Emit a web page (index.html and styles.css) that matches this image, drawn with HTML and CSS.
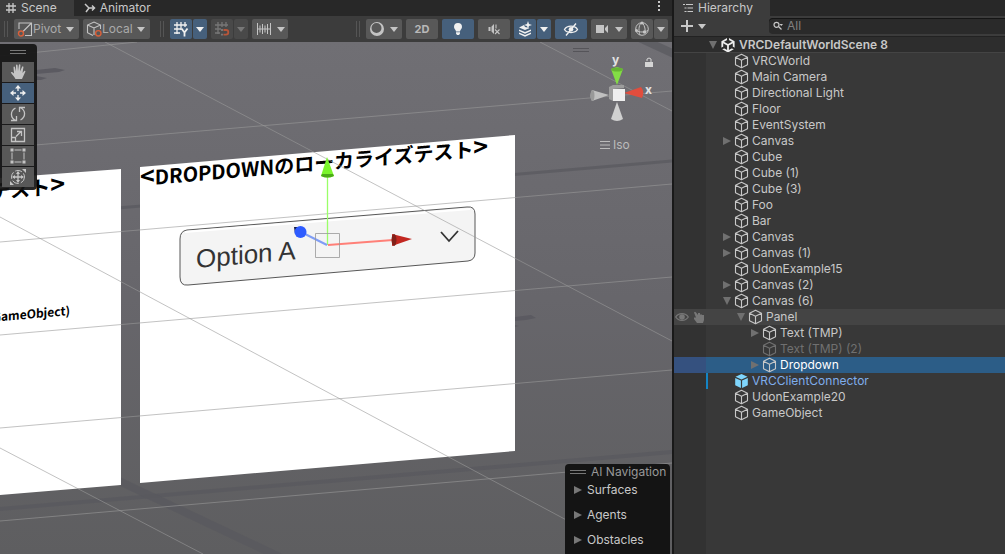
FILE: index.html
```html
<!DOCTYPE html>
<html lang="en">
<head>
<meta charset="utf-8">
<title>Scene editor</title>
<link rel="stylesheet" href="styles.css">
</head>
<body>
<svg class="defs" width="0" height="0" aria-hidden="true">
  <symbol id="caret" viewBox="0 0 8 5"><path d="M0 0h8L4 5z" fill="currentColor"/></symbol>
  <symbol id="arrow" viewBox="0 0 8 8"><path d="M0 0l8 4-8 4z" fill="currentColor"/></symbol>
  <symbol id="arrow-down" viewBox="0 0 8 8"><path d="M0 0h8L4 8z" fill="currentColor"/></symbol>
  <symbol id="cube" viewBox="0 0 16 16"><path d="M7.500 1.300l6 3v7.400l-6 3-6-3V4.300zM1.500 4.300l6 3 6-3M7.500 7.300v7.400" fill="none" stroke="currentColor" stroke-width="1.1" stroke-linejoin="round"/></symbol>
  <symbol id="prefab" viewBox="0 0 16 16"><path d="M7.500 1l6 2.700-6 2.700-6-2.700zM1.200 5l5.700 2.500V15l-5.700-2.800zM13.800 5L8.100 7.500V15l5.700-2.800z" fill="currentColor"/></symbol>
</svg>
<main class="editor">
  <section class="pane" aria-label="Scene">
    <div class="tabs" role="tablist">
      <button class="tab tab-active" role="tab" aria-selected="true"><svg width="12" height="12" viewBox="0 0 12 12"><path d="M4 1v10M8 1v10M1 4h10M1 8h10" stroke="currentColor" stroke-width="1.3"/></svg>Scene</button>
      <button class="tab" role="tab" aria-selected="false"><svg width="12" height="12" viewBox="0 0 12 12"><path d="M1 2l4 4-3 4M5 6h5M8 3.500L10.500 6 8 8.500" fill="none" stroke="currentColor" stroke-width="1.500"/></svg>Animator</button>
      <button class="more" aria-label="More"><svg width="4" height="12" viewBox="0 0 4 12"><path d="M1 1h2v2H1zM1 5h2v2H1zM1 9h2v2H1z" fill="currentColor"/></svg></button>
    </div>
    <div class="toolbar">
      <div class="group">
        <i class="grip"></i>
        <label class="tool pivot"><svg width="16" height="16" viewBox="0 0 16 16"><path d="M2 8V2h12.500v12.500H8M6 10.500L14.500 2" fill="none" stroke="currentColor" stroke-width="1.100"/><circle cx="4" cy="12.500" r="2.500" fill="none" stroke="#d9603a" stroke-width="1.400"/></svg><select aria-label="Handle position"><option>Pivot</option></select><svg class="caret"><use href="#caret"/></svg></label>
        <label class="tool local"><svg width="16" height="16" viewBox="0 0 16 16"><path d="M7 14.500l-5.500-2.800V4L8 1l6.500 3v4M1.500 4L8 7l6.500-3M8 7v7" fill="none" stroke="currentColor" stroke-width="1.100"/><circle cx="12.300" cy="12.300" r="2.700" fill="none" stroke="#d9603a" stroke-width="1.400"/></svg><select aria-label="Handle rotation"><option>Local</option></select><svg class="caret"><use href="#caret"/></svg></label>
      </div>
      <div class="group">
        <i class="grip"></i>
        <span class="split"><button class="tool icon on" aria-label="Grid visibility"><svg width="16" height="16" viewBox="0 0 16 16"><path d="M4 1v12M8 1v8M12 1v5M1 4h13M1 8h7M1 12h6" stroke="currentColor" stroke-width="1.300"/><path d="M8.500 7.500l3 4 3-4M11.500 11.500V15.500" fill="none" stroke="currentColor" stroke-width="1.800"/></svg></button><button class="tool drop on" aria-label="Grid options"><svg class="caret"><use href="#caret"/></svg></button></span>
        <span class="split off"><button class="tool icon" disabled aria-label="Grid snapping"><svg width="16" height="16" viewBox="0 0 16 16"><path d="M4 1v12M8 1v5M12 1v5M1 4h13M1 8h6M1 12h5" stroke="currentColor" stroke-width="1.300"/><path d="M9.500 9H12a2.300 2.300 0 010 4.600H9.500" fill="none" stroke="#b8563a" stroke-width="1.800"/><path d="M7 9h2M7 13.600h2" stroke="currentColor" stroke-width="1.800"/></svg></button><button class="tool drop" disabled aria-label="Snapping options"><svg class="caret"><use href="#caret"/></svg></button></span>
        <button class="tool menu" aria-label="Snap increment"><svg width="16" height="16" viewBox="0 0 16 16"><path d="M1.500 2v12M14.500 2v12M4 4.500v7M6.500 3v10M9 4.500v7M11.500 3v10M1 8h14" stroke="currentColor"/></svg><svg class="caret"><use href="#caret"/></svg></button>
      </div>
      <div class="group end">
        <i class="grip"></i>
        <button class="tool menu" aria-label="Draw mode"><svg width="16" height="16" viewBox="0 0 16 16"><path fill-rule="evenodd" d="M8 1a7 7 0 100 14A7 7 0 108 1zM7.500 2a5 5 0 110 10 5 5 0 110-10z" fill="currentColor"/></svg><svg class="caret"><use href="#caret"/></svg></button>
        <button class="tool wide two-d">2D</button>
        <button class="tool wide on" aria-label="Lighting"><svg width="16" height="16" viewBox="0 0 16 16"><path d="M8 2a4 4 0 014 4c0 2-1.800 2.800-2 4.500H6C5.800 8.800 4 8 4 6a4 4 0 014-4zM6 11.300h4v1.200L9 14H7l-1-1.500z" fill="currentColor"/></svg></button>
        <button class="tool wide" aria-label="Audio"><svg width="16" height="16" viewBox="0 0 16 16"><path d="M2.500 6h2v4h-2zM5.500 5.500L8 3v10l-2.500-2.500z" fill="currentColor"/><path d="M10 3.500v4M9 8.500l4.500 4.500M13.500 8.500L9 13" stroke="currentColor" stroke-width="1.100"/></svg></button>
        <span class="split"><button class="tool icon on" aria-label="Effects"><svg width="16" height="16" viewBox="0 0 16 16"><path d="M2 6.500L7 4l1 2 4.500 1L8 9zM2 8.500L8 11l6-2.500V10l-6 2.700L2 10zM2 11.500L8 14l6-2.500V13l-6 2.700L2 13z" fill="currentColor"/><path d="M11 0l1 3 3 1-3 1-1 3-1-3-3-1 3-1z" fill="currentColor"/></svg></button><button class="tool drop on" aria-label="Effects options"><svg class="caret"><use href="#caret"/></svg></button></span>
        <button class="tool wide on" aria-label="Hidden objects"><svg width="16" height="16" viewBox="0 0 16 16"><path d="M1.500 8.500C4 4 12 4 14.500 8.500 12 12.500 4 12.500 1.500 8.500zM13 2.500l-10 12" fill="none" stroke="currentColor" stroke-width="1.400"/><circle cx="8" cy="8.300" r="2.300" fill="currentColor"/></svg></button>
        <button class="tool menu" aria-label="Camera"><svg width="16" height="16" viewBox="0 0 16 16"><path d="M2 4h8v8H2zM11 7l3-3v8l-3-3z" fill="currentColor"/></svg><svg class="caret"><use href="#caret"/></svg></button>
        <span class="split"><button class="tool icon" aria-label="Gizmos"><svg width="16" height="16" viewBox="0 0 16 16"><g fill="none" stroke="currentColor"><circle cx="8" cy="8" r="6.300"/><path d="M7 2C4.500 5 4.500 10 6 14M8.500 2c2.500 3 3 7 2.500 10M2 9.500c4 2 8 2 12 0"/></g><circle cx="8" cy="2" r="1.500" fill="currentColor"/><circle cx="2.500" cy="9.500" r="1.500" fill="currentColor"/><circle cx="10.500" cy="11" r="1.700" fill="currentColor"/></svg></button><button class="tool drop" aria-label="Gizmo options"><svg class="caret"><use href="#caret"/></svg></button></span>
      </div>
    </div>
    <div class="viewport">
      <svg class="world" viewBox="0 42 672 512" preserveAspectRatio="xMinYMin slice" role="img" aria-label="3D scene">
        <defs><linearGradient id="ground" x1="0" y1="0" x2="0" y2="1"><stop offset="0" stop-color="#706f74"/><stop offset=".5" stop-color="#67666b"/><stop offset="1" stop-color="#5e5e60"/></linearGradient></defs>
        <rect y="42" width="672" height="512" fill="url(#ground)"/>
        <g fill="none" stroke="#59585e" stroke-opacity=".7">
          <path d="M0 218L672 161" stroke-width="3"/><path d="M0 509L672 452" stroke-width="4"/>
          <path d="M100 472L290 562" stroke-width="8"/><path d="M635 36L685 59" stroke-width="8"/>
        </g>
        <path d="M36 70l19-2 10 2-6 2-23 2zM36 76l11 2-6 2h-5zM515 317l16-2 5 3-10 2-11 1zM515 325l4 1-4 1z" fill="#5b5a61"/>
        <path d="M0 178L121 169V485L0 495zM140 167L515 135V451L140 483z" fill="#fff"/>
        <g class="banner">
          <text transform="translate(140 186) skewY(-5)"><tspan class="bracket">&lt;</tspan>DROPDOWNのローカライズテスト<tspan class="bracket">&gt;</tspan></text>
          <text text-anchor="end" transform="translate(65 193) skewY(-5)">テスト<tspan class="bracket">&gt;</tspan></text>
          <text class="caption" text-anchor="end" transform="translate(70 315) skewY(-5)">GameObject)</text>
        </g>
        <path d="M187 230L467 207Q475 206 475 214V253Q475 260 468 261L188 285Q180 286 180 277V239Q180 231 187 230z" fill="#f4f4f4" stroke="#444" stroke-width=".9"/>
        <path d="M185 232L470 209" stroke="#fff" stroke-width="2"/>
        <text class="option" transform="translate(196 268) skewY(-5)">Option A</text>
        <path d="M441 232l8 9 9-10" fill="none" stroke="#333" stroke-width="1.800"/>
        <g fill="none" stroke="#999" stroke-opacity=".6">
          <path d="M0 56L137 42M0 148L672 91M0 242L672 184M0 335L672 277M0 428L672 370M0 521L672 463"/>
          <path d="M105 42L672 341M0 217L630 554M0 448L203 554M540 42L672 111"/>
        </g>
        <path d="M327.500 245V177" stroke="#9aff68" stroke-width="1.300"/><path d="M321 176l6-19 7 19q-6 3-13 0z" fill="#7bf52c"/><path d="M321 176q6 3 13 0l-1-2h-11z" fill="#4cab18"/>
        <path d="M328 245l65-5" stroke="#ff8078" stroke-width="2"/><path d="M392 234l20 5-20 7z" fill="#c22720"/><ellipse cx="394" cy="240" rx="2.500" ry="6" fill="#812019"/>
        <path d="M327 245l-24-12" stroke="#7f9df5" stroke-width="2"/><path d="M294 227h6v7h-5z" fill="#101a48"/><circle cx="300.500" cy="232" r="6" fill="#2d5bff"/>
        <path d="M315.500 233.500h24v24h-24z" fill="none" stroke="#999" stroke-opacity=".8"/>
      </svg>
      <div class="palette" role="toolbar" aria-label="Tools">
        <i class="handle"></i>
        <button class="tool" aria-label="Hand"><svg width="16" height="16" viewBox="0 0 16 16"><path d="M5.500 15C4 12 2 10.500.800 8.500c.700-1 1.800-.500 3.200 1L3.500 3.500c0-1.200 1.300-1.200 1.500 0L6 7.500V1.500c0-1.200 1.500-1.200 1.600 0L8 7l.900-6c.200-1.200 1.600-1 1.500.200L10 7.500 12 3c.5-1.200 1.700-.700 1.400.500L12.500 9l1.700-2c.8-.700 1.600 0 1 1L12 15z" fill="currentColor"/></svg></button>
        <button class="tool on" aria-label="Move"><svg width="16" height="16" viewBox="0 0 16 16"><path d="M8 2v4M8 10v4M2 8h4M10 8h4" stroke="currentColor" stroke-width="1.300"/><path d="M5 3.500L8 0l3 3.500zM5 12.500L8 16l3-3.500zM3.500 5L0 8l3.500 3zM12.500 5L16 8l-3.500 3z" fill="currentColor"/></svg></button>
        <button class="tool" aria-label="Rotate"><svg width="16" height="16" viewBox="0 0 16 16"><path d="M6 14.500C0 12 0 5 5.500 2M10 1.500C16 4 16 11 10.500 14M1 14.500h5.500V10M15 1.500H9.500V6" fill="none" stroke="currentColor" stroke-width="1.300"/></svg></button>
        <button class="tool" aria-label="Scale"><svg width="16" height="16" viewBox="0 0 16 16"><path d="M1.500 1.500h13v13h-13zM1.500 10.500h4v4M6 9.500L11 4.500M7 4.500h4.500V9" fill="none" stroke="currentColor" stroke-width="1.300"/></svg></button>
        <button class="tool" aria-label="Rect"><svg width="16" height="16" viewBox="0 0 16 16"><path d="M4.500 2h7M4.500 14h7M2 4.500v7M14 4.500v7" stroke="currentColor"/><path d="M.500.500h3v3h-3zM12.500.500h3v3h-3zM.500 12.500h3v3h-3zM12.500 12.500h3v3h-3z" fill="currentColor"/></svg></button>
        <button class="tool" aria-label="Transform"><svg width="16" height="16" viewBox="0 0 16 16"><circle cx="8" cy="8" r="6.500" fill="none" stroke="currentColor" stroke-dasharray="7 2"/><path d="M8 3v10M3 8h10" stroke="currentColor" stroke-width="1.300"/><path d="M6 5l2-3 2 3zM6 11l2 3 2-3zM5 6L2 8l3 2zM11 6l3 2-3 2zM12 0h4v4zM0 12v4h4z" fill="currentColor"/></svg></button>
      </div>
      <div class="compass">
        <i class="handle dim"></i>
        <svg width="84" height="85" viewBox="580 52 84 85" role="img" aria-label="Orientation">
          <path d="M611 69l6-2 6 2-6 16z" fill="#83dd45"/><ellipse cx="617" cy="69.500" rx="6" ry="2" fill="#66b533"/>
          <path d="M611 119l6-17 6 17q-6 4-12 0z" fill="#d0d0d0"/>
          <path d="M592 90l17 5-17 6q-3-5 0-11z" fill="#c0c0c0"/><ellipse cx="592.500" cy="95.500" rx="2" ry="5.500" fill="#999"/>
          <path d="M624 93l17-6q4 5 1 11z" fill="#e14d3d"/><path d="M609 87l4-2h11v3l-11 1v12l-4-2z" fill="#9c9c9c"/><path d="M613 89h12v12h-12z" fill="#eee"/>
          <text x="612" y="64">y</text><text x="645" y="94">x</text>
          <path d="M645 62h8v5h-8z" fill="#d5d5d5"/><path d="M647 61v-2q2-2 4 0v3" fill="none" stroke="#d5d5d5"/>
        </svg>
        <button class="iso"><svg width="10" height="8" viewBox="0 0 10 8"><path d="M0 .500h10M0 4h10M0 7.500h10" stroke="currentColor"/></svg>Iso</button>
      </div>
      <section class="nav">
        <h2><i class="handle"></i>AI Navigation</h2>
        <button><svg><use href="#arrow"/></svg>Surfaces</button>
        <button><svg><use href="#arrow"/></svg>Agents</button>
        <button><svg><use href="#arrow"/></svg>Obstacles</button>
      </section>
    </div>
  </section>
  <section class="pane" aria-label="Hierarchy">
    <div class="tabs" role="tablist">
      <button class="tab tab-active tab-hierarchy" role="tab" aria-selected="true"><svg width="12" height="12" viewBox="0 0 12 12"><path d="M1 2.500h2M4 2.500h7M2.500 6h2M5.500 6H11M2.500 9.500h2M5.500 9.500H11" stroke="currentColor" stroke-width="1.200"/></svg>Hierarchy</button>
    </div>
    <div class="searchbar">
      <button class="add" aria-label="Add"><svg width="12" height="12" viewBox="0 0 12 12"><path d="M6 0v12M0 6h12" stroke="currentColor" stroke-width="2"/></svg><svg class="caret"><use href="#caret"/></svg></button>
      <label class="search"><svg width="10" height="10" viewBox="0 0 10 10"><circle cx="3.500" cy="3.800" r="2.500" fill="none" stroke="currentColor" stroke-width="1.200"/><path d="M5.500 5.500l3 3" stroke="currentColor" stroke-width="1.300"/><path d="M6.500 3H10L8.300 5z" fill="currentColor"/></svg><input type="search" placeholder="All" aria-label="Search"></label>
    </div>
    <div class="scene-row"><svg class="twist"><use href="#arrow-down"/></svg><svg class="logo" width="14" height="14" viewBox="0 0 14 14"><path d="M7 .500L12.700 3.800v6.400L7 13.500 1.300 10.200V3.800z" fill="none" stroke="#eee" stroke-width="1.800"/><path d="M7 7v6M7 7L2 4.200M7 7l5-2.800" stroke="#eee" stroke-width="1.800"/><path d="M7 0v3M0 11l3-1.700M14 11l-3-1.700" stroke="#2d2d2d" stroke-width="2"/></svg>VRCDefaultWorldScene 8</div>
    <ul class="tree" role="tree">
      <li role="treeitem"><i></i><svg><use href="#cube"/></svg>VRCWorld</li>
      <li role="treeitem"><i></i><svg><use href="#cube"/></svg>Main Camera</li>
      <li role="treeitem"><i></i><svg><use href="#cube"/></svg>Directional Light</li>
      <li role="treeitem"><i></i><svg><use href="#cube"/></svg>Floor</li>
      <li role="treeitem"><i></i><svg><use href="#cube"/></svg>EventSystem</li>
      <li role="treeitem"><i><svg class="twist"><use href="#arrow"/></svg></i><svg><use href="#cube"/></svg>Canvas</li>
      <li role="treeitem"><i></i><svg><use href="#cube"/></svg>Cube</li>
      <li role="treeitem"><i></i><svg><use href="#cube"/></svg>Cube (1)</li>
      <li role="treeitem"><i></i><svg><use href="#cube"/></svg>Cube (3)</li>
      <li role="treeitem"><i></i><svg><use href="#cube"/></svg>Foo</li>
      <li role="treeitem"><i></i><svg><use href="#cube"/></svg>Bar</li>
      <li role="treeitem"><i><svg class="twist"><use href="#arrow"/></svg></i><svg><use href="#cube"/></svg>Canvas</li>
      <li role="treeitem"><i><svg class="twist"><use href="#arrow"/></svg></i><svg><use href="#cube"/></svg>Canvas (1)</li>
      <li role="treeitem"><i></i><svg><use href="#cube"/></svg>UdonExample15</li>
      <li role="treeitem"><i><svg class="twist"><use href="#arrow"/></svg></i><svg><use href="#cube"/></svg>Canvas (2)</li>
      <li role="treeitem" aria-expanded="true"><i><svg class="twist"><use href="#arrow-down"/></svg></i><svg><use href="#cube"/></svg>Canvas (6)</li>
      <li role="treeitem" aria-expanded="true" class="hover level-2"><span class="flags"><svg width="14" height="10" viewBox="0 0 14 10"><path d="M.700 5C3.500.500 10.500.500 13.300 5 10.500 9.500 3.500 9.500.700 5z" fill="none" stroke="currentColor" stroke-width="1.200"/><circle cx="7" cy="5" r="2.800" fill="currentColor"/></svg><svg width="12" height="12" viewBox="0 0 12 12"><path d="M1 1.500Q2 0 3 1.500L5 4V2h2v1.500h2V4h2v5l-1 3H4L1 8V6.500h2z" fill="currentColor"/></svg></span><i><svg class="twist"><use href="#arrow-down"/></svg></i><svg><use href="#cube"/></svg>Panel</li>
      <li role="treeitem" class="level-3"><i><svg class="twist"><use href="#arrow"/></svg></i><svg><use href="#cube"/></svg>Text (TMP)</li>
      <li role="treeitem" class="level-3 inactive"><i></i><svg><use href="#cube"/></svg>Text (TMP) (2)</li>
      <li role="treeitem" aria-selected="true" class="level-3 selected"><i><svg class="twist"><use href="#arrow"/></svg></i><svg><use href="#cube"/></svg>Dropdown</li>
      <li role="treeitem" class="linked"><i></i><svg><use href="#prefab"/></svg>VRCClientConnector</li>
      <li role="treeitem"><i></i><svg><use href="#cube"/></svg>UdonExample20</li>
      <li role="treeitem"><i></i><svg><use href="#cube"/></svg>GameObject</li>
    </ul>
  </section>
</main>
</body>
</html>
```
FILE: styles.css
```css
* { box-sizing: border-box; }
body { margin: 0; background: #191919; color: #c8c8c8; font: 12px/16px Inter, "Noto Sans CJK JP", sans-serif; }
button, select, input { font: inherit; color: inherit; border: 0; padding: 0; background: none; }
svg { flex: none; }
.defs { position: absolute; }
.editor { display: grid; grid-template-columns: minmax(0, 2.03fr) minmax(0, 1fr); gap: 2px; min-height: 100vh; }
.pane { display: flex; flex-direction: column; min-width: 0; background: #383838; overflow: hidden; }

.tabs { display: flex; height: 16px; background: #282828; }
.tab { display: flex; align-items: center; gap: 4px; padding: 0 17px 0 5px; margin-right: 5px; white-space: nowrap; }
.tab-active { background: #3c3c3c; }
.tab-hierarchy { padding: 0 17px 0 8px; }
.more { margin-left: auto; padding: 0 11px; }

.toolbar { display: flex; gap: 10px; height: 26px; padding: 3px 4px; background: #3c3c3c; }
.group { display: flex; gap: 4px; }
.end { margin-left: auto; }
.grip { width: 4px; height: 16px; margin: 2px 2px 0 0; border: solid #555; border-width: 0 1px; }
.tool { display: flex; align-items: center; justify-content: center; height: 20px; border-radius: 2px; background: #585858; color: #c4c4c4; }
.pivot, .local { padding: 0 5px 0 3px; }
.pivot { width: 65px; }
.local { width: 67px; }
.tool select { appearance: none; flex: 1; min-width: 0; color: #aaa; }
.caret { width: 8px; height: 5px; }
.split { display: flex; gap: 1px; }
.icon { width: 22px; }
.drop { width: 14px; }
.menu { width: 36px; gap: 5px; }
.wide { width: 32px; }
.on { background: #46607c; color: #f0f0f0; }
.off .tool { background: #494949; color: #777; }
.two-d { font-size: 11px; font-weight: 700; color: #b8b8b8; }

.viewport { position: relative; flex: 1; min-height: 512px; }
.world { position: absolute; inset: 0; width: 100%; height: 100%; }
.banner { font: 700 20px "Noto Sans CJK JP", sans-serif; fill: #000; }
.bracket { font-size: 25px; }
.caption { font-size: 12px; }
.option { font: 26px "Liberation Sans", sans-serif; fill: #333; }
.handle { display: block; width: 16px; height: 4px; border: solid #777; border-width: 1px 0; }
.dim { border-color: #555459; }
.palette { position: absolute; left: 0; top: 2px; display: flex; flex-direction: column; gap: 1px; width: 37px; padding: 6px 3px 3px 2px; border-radius: 0 4px 4px 0; background: rgb(20 20 20 / 92%); }
.palette .handle { margin: 0 8px 7px; }
.palette .tool { border-radius: 0; }
.compass { position: absolute; right: 8px; top: 6px; display: flex; flex-direction: column; width: 92px; }
.compass .dim { margin-left: 1px; }
.compass > svg { margin: 0 0 0 8px; }
.compass text { font: 700 12px Inter, sans-serif; fill: #e2e2e2; }
.iso { display: flex; align-items: center; gap: 3px; padding-left: 28px; color: #bbb; }
.nav { position: absolute; right: 2px; bottom: 0; width: 105px; height: 90px; padding-left: 5px; border-radius: 4px 4px 0 0; background: #141414; overflow: hidden; }
.nav h2 { display: flex; align-items: center; gap: 5px; height: 16px; margin: 0 0 -3px; font: inherit; color: #999; white-space: nowrap; }
.nav button { display: flex; align-items: center; gap: 5px; width: 100%; height: 25px; padding-left: 4px; }
.nav button svg { width: 8px; height: 8px; color: #777; }

.searchbar { display: flex; align-items: center; height: 20px; padding: 2px 0; background: #3c3c3c; }
.add { display: flex; align-items: center; gap: 5px; width: 95px; padding-left: 7px; }
.search { display: flex; align-items: center; gap: 4px; flex: 1; height: 16px; padding-left: 4px; border-radius: 4px 0 0 4px; background: #2a2a2a; box-shadow: inset 0 1px #151515; }
.search input { flex: 1; min-width: 0; appearance: none; outline: 0; }
.search input::placeholder { color: #808080; }
.scene-row { display: flex; align-items: center; gap: 4px; height: 17px; padding-left: 35px; border: solid #222; border-width: 1px 0; border-bottom-color: #444; background: #2d2d2d; font-weight: 600; white-space: nowrap; }
.twist { width: 8px; height: 8px; color: #707070; }
.tree { flex: 1; margin: 0; padding: 0; list-style: none; background: linear-gradient(90deg, #323232 32px, #383838 32px); }
.tree li { position: relative; display: flex; align-items: center; height: 16px; padding-left: 48px; white-space: nowrap; }
.tree li > i { display: flex; width: 12px; padding-left: 1px; }
.tree li > svg { width: 16px; height: 16px; margin-right: 2px; }
.tree .level-2 { padding-left: 62px; }
.tree .level-3 { padding-left: 76px; }
.tree .hover { background: #444; }
.tree .selected { background: linear-gradient(90deg, #35517f 32px, #2c5d87 32px); color: #fff; }
.selected > svg { color: #c8c8c8; }
.tree .inactive { color: #707070; }
.tree .linked { color: #7fadec; box-shadow: inset 32px 0 #323232, inset 34px 0 #1484c4; }
.linked svg { color: #7fd6fd; }
.flags { position: absolute; left: 1px; display: flex; align-items: center; gap: 4px; color: #777; }
```
